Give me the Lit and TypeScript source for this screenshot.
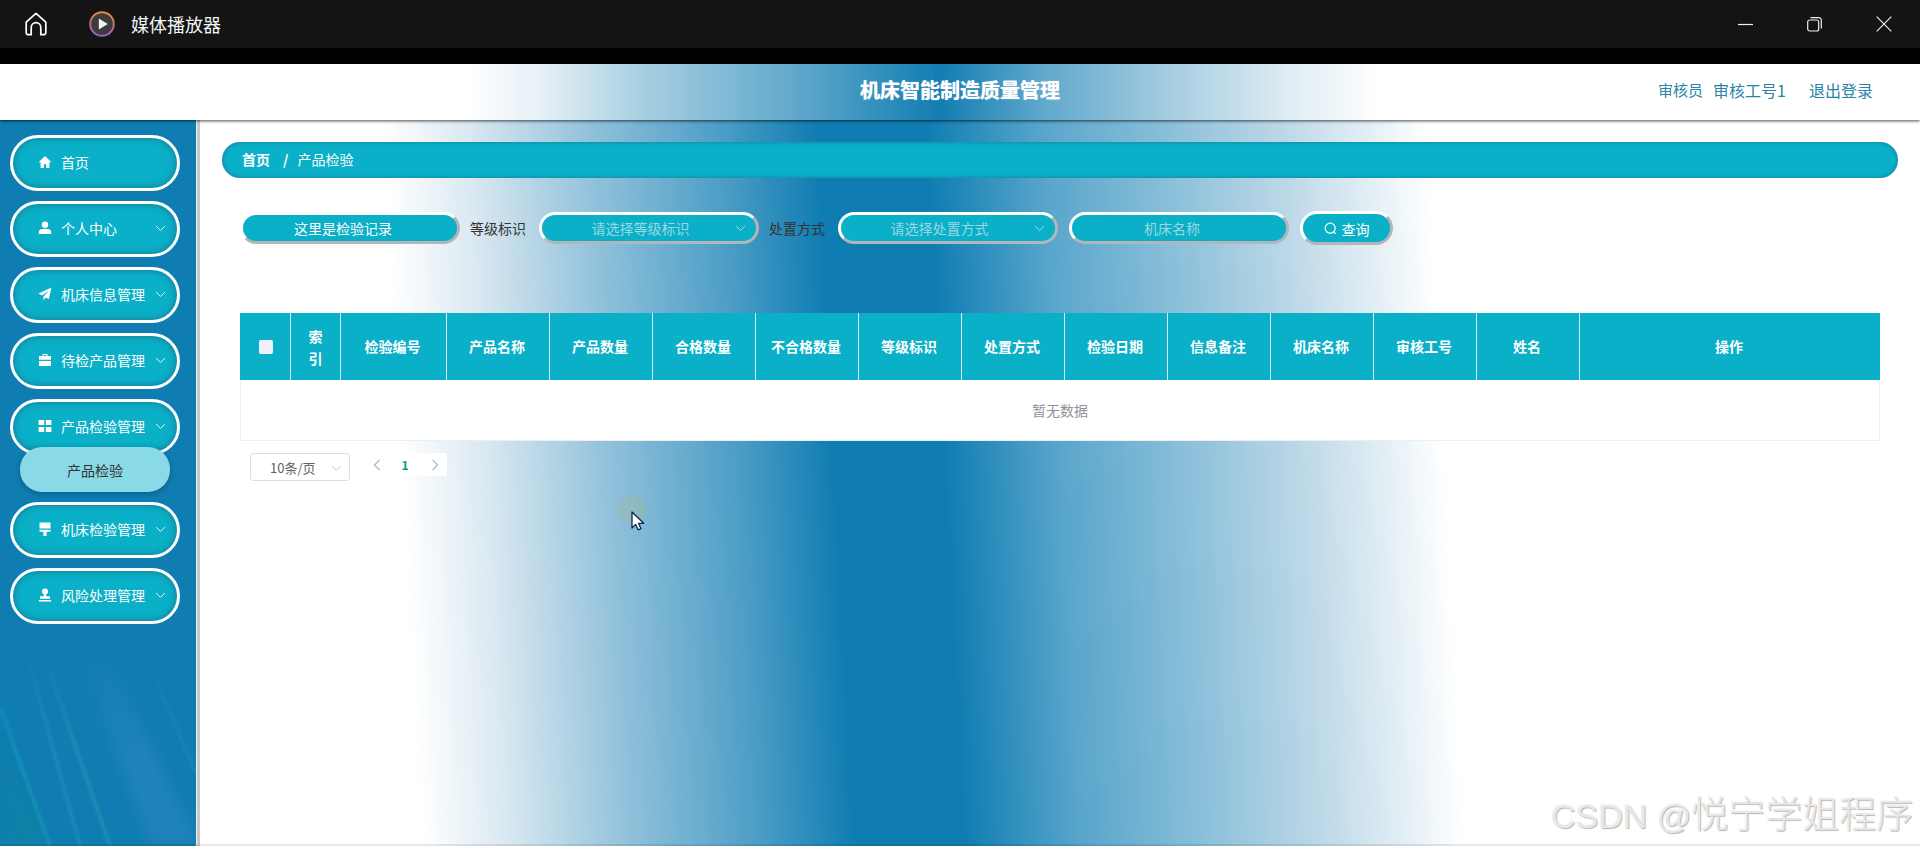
import { LitElement, html, css, svg } from "lit";
import { customElement } from "lit/decorators.js";

const chevron = html`<svg class="chev" viewBox="0 0 12 8" width="11" height="7"><path d="M1 1.2 6 6.2 11 1.2" fill="none" stroke="currentColor" stroke-width="1.1"/></svg>`;

const icons: Record<string, unknown> = {
  home: svg`<path d="M7 1 .6 7.2h2V13h3.3V9.2h2.2V13h3.3V7.2h2z" fill="#fff"/>`,
  user: svg`<circle cx="7" cy="3.8" r="3.2" fill="#fff"/><path d="M.8 13v-2c0-2 1.800-3 3.600-3h5.200c1.800 0 3.600 1 3.600 3v2z" fill="#fff"/>`,
  plane: svg`<path d="M13.500.5 .5 6.500l3.500 2L11 3.500 5.500 9.500v3.800l2.300-2.800 3 1.600z" fill="#fff"/>`,
  case: svg`<path d="M4.500 3V1h5v2H13v3.800H1V3zM5.700 3h2.600V2.100H5.700zM1 8h12v5H1z" fill="#fff"/>`,
  grid: svg`<path d="M.6 1h5.600v5H.6zM7.800 1h5.600v5H7.800zM.6 8h5.600v5H.6zM7.800 8h5.600v5H7.800z" fill="#fff"/>`,
  brush: svg`<path d="M1.500.5h11v6h-11zM1.500 7.800h11v2H8.600V14H5.400V9.800H1.500z" fill="#fff"/>`,
  stamp: svg`<circle cx="7" cy="3.600" r="3" fill="#fff"/><path d="M5.800 6h2.400v2.200H12v2.600H2V8.200h3.800zM.8 12h12.400v1.500H.8z" fill="#fff"/>`,
};

const menu = [
  { name: "首页", icon: "home", arrow: false },
  { name: "个人中心", icon: "user", arrow: true },
  { name: "机床信息管理", icon: "plane", arrow: true },
  { name: "待检产品管理", icon: "case", arrow: true },
  { name: "产品检验管理", icon: "grid", arrow: true, sub: "产品检验" },
  { name: "机床检验管理", icon: "brush", arrow: true },
  { name: "风险处理管理", icon: "stamp", arrow: true },
];

const cols = ["索引", "检验编号", "产品名称", "产品数量", "合格数量", "不合格数量", "等级标识", "处置方式", "检验日期", "信息备注", "机床名称", "审核工号", "姓名", "操作"];

@customElement("app-root")
export class AppRoot extends LitElement {
  static styles = css`
    :host {
      display: block;
      position: relative;
      width: 1920px;
      height: 846px;
      overflow: hidden;
      font-family: "Noto Sans CJK SC", "Liberation Sans", sans-serif;
      font-size: 14px;
      background: #fff;
      color: #333;
    }
    .app { display: flex; flex-direction: column; height: 846px; }
    .titlebar { height: 48px; background: #141414; display: flex; align-items: center; color: #fff; flex: none; }
    .tb-home { margin-left: 24px; display: block; }
    .tb-logo { margin-left: 41px; display: block; }
    .tb-name { margin-left: 16px; font-size: 18px; line-height: 24px; color: #f5f5f5; }
    .win { margin-left: auto; display: flex; align-items: center; gap: 54px; padding-right: 28px; }
    .win svg { display: block; }
    .blackbar { height: 16px; background: #000; flex: none; }
    .header {
      height: 56px; flex: none; position: relative; z-index: 3; box-sizing: border-box; padding-bottom: 5px;
      display: grid; grid-template-columns: 1fr auto 1fr; align-items: center;
      background: linear-gradient(90deg, #fff 470px, #e6f0f6 540px, #a9cfe2 640px, #5ea7ca 800px, #127db2 940px, #5ea7cb 1040px, #a5cde1 1170px, #dfecf4 1290px, #fff 1380px);
      box-shadow: 0 1px 3px rgba(0, 0, 0, 0.7);
    }
    .title { grid-column: 2; font-size: 20px; font-weight: 700; color: #fff; text-shadow: 0 0 1px #fff; }
    .user { grid-column: 3; justify-self: end; padding-right: 47px; display: flex; align-items: center; font-size: 16px; color: #2b85a6; }
    .user .role { margin-right: 10px; font-size: 15px; }
    .user .logout { margin-left: 23px; }
    .body { flex: 1; display: flex; min-height: 0; }
    .side {
      flex: none; position: relative; overflow: hidden;
      background: #107db2; border-right: 1px solid #f1f1f1;
      padding: 15px 16px 0 10px; box-sizing: content-box; width: 170px;
      display: flex; flex-direction: column; gap: 10px;
    }
    .streaks { position: absolute; left: 0; bottom: 0; display: block; }
    .item {
      position: relative; height: 56px; box-sizing: border-box; flex: none;
      display: flex; align-items: center;
      padding: 0 11px 2px 25px; border: 3px solid #fff; border-radius: 28px;
      background: #0aafc8; color: #fff;
      box-shadow: inset 0 0 7px rgba(40, 70, 90, 0.55);
    }
    .item .ic { display: block; width: 14px; height: 14px; margin-right: 9px; flex: none; }
    .item .chev { margin-left: auto; color: #e4f7fa; }
    .sub {
      position: relative; z-index: 1; flex: none; margin: -18px 10px 0; height: 45px; border-radius: 22px;
      background: #8ad9e6; color: #333; display: flex; align-items: center; justify-content: center;
      box-shadow: 0 2px 6px rgba(0, 50, 80, 0.4);
    }
    .main {
      flex: 1; min-width: 0; border-left: 3px solid #c9c9cd;
      padding: 22px 22px 0 22px;
      background: linear-gradient(87deg, #fff 12.6%, #d9e8f1 17.5%, #8fc0da 24.6%, #4a9cc5 32%, #107db2 37.2%, #107db2 43.5%, #58a5cb 50%, #84bcd8 56.3%, #bed9e8 64%, #fff 72%);
    }
    .crumb {
      height: 36px; border-radius: 18px; background: #0aafc8; color: #fff; box-sizing: border-box;
      display: flex; align-items: center; padding: 0 20px 2px;
      box-shadow: inset 0 0 4px rgba(40, 70, 90, 0.5);
    }
    .crumb b { font-weight: 700; }
    .crumb i { font-weight: 700; font-style: normal; margin: 0 9px 0 13px; }
    .content { padding-left: 18px; width: 1640px; }
    .filters { display: flex; align-items: center; height: 34px; margin-top: 33px; }
    .box {
      box-sizing: border-box; height: 32px; width: 220px; flex: none; padding-right: 14px;
      border: 3px solid; border-color: #fff #b4b4ba #b4b4ba #fff; border-radius: 16px;
      background: #0aafc8; color: #fff; position: relative;
      display: flex; align-items: center; justify-content: center;
    }
    .box.ph { color: #9ad8e3; }
    .box.sel { padding-right: 17px; }
    .box .chev { position: absolute; right: 10px; top: 10px; color: #a3dce6; }
    .label { color: #333; margin: 0 13px 0 10px; flex: none; }
    .gap { margin-left: 11px; }
    .btn {
      box-sizing: border-box; width: 93px; height: 34px; flex: none; margin-left: 11px; padding-top: 1px;
      border: 3px solid; border-color: #fff #b4b4ba #b4b4ba #fff; border-radius: 17px;
      background: #0aafc8; color: #fff; display: flex; align-items: center; justify-content: center; gap: 5px;
    }
    .btn svg { display: block; }
    .table { margin-top: 68px; border: 1px solid #ebeef5; border-top: 0; background: #fff; box-sizing: border-box; }
    .thead { display: grid; grid-template-columns: 50px 50px 106px repeat(11, 103px) 1fr; height: 67px; background: #0aafc8; margin-left: -1px; margin-right: -1px; }
    .th {
      display: flex; align-items: center; justify-content: center; text-align: center; padding: 0 2px 2px 0;
      color: #fff; font-weight: 700; border-left: 1px solid #d9f3f7; box-sizing: border-box; line-height: 22px;
    }
    .th.first { border-left: 0; padding: 0 0 0 2px; }
    .th.idx { padding: 0 14px; }
    .check { width: 14px; height: 14px; border-radius: 2px; background: #eef1fb; }
    .empty { height: 60px; display: flex; align-items: center; justify-content: center; color: #909399; }
    .pager { display: flex; align-items: flex-start; margin: 12px 0 0 10px; }
    .size {
      box-sizing: border-box; width: 100px; height: 28px; background: #fff; border: 1px solid #dcdfe6; border-radius: 3px;
      display: flex; align-items: center; padding-left: 19px; font-size: 13px; color: #606266; position: relative;
    }
    .size .chev { position: absolute; right: 7px; top: 11px; color: #c0c4cc; }
    .pages { display: flex; margin-left: 10px; height: 23px; background: #fff; align-items: center; }
    .pg { width: 34px; box-sizing: border-box; display: flex; justify-content: center; color: #b5b9c0; }
    .pg.cur { width: 22px; color: #0a9e7e; font-size: 12px; font-weight: 700; }
    .pg.next { width: 31px; padding-left: 6px; }
    .pg svg { display: block; }
    .watermark {
      position: absolute; left: 1551px; top: 790px; font-size: 34px; line-height: 44px; white-space: nowrap;
      font-family: "Liberation Sans", "Noto Sans CJK SC", sans-serif;
      color: #e8e8e8; text-shadow: 1px 1px 1px #b5b5b5, -1px -1px 0 #f8f8f8;
    }
    .watermark span { font-size: 37px; font-family: "Noto Sans CJK SC", sans-serif; font-weight: 300; }
    .bottom { position: absolute; left: 0; right: 0; bottom: 0; height: 2px; background: rgba(0, 0, 0, 0.09); }
    .cursor { position: absolute; left: 617px; top: 495px; display: block; }
  `;

  render() {
    return html`
      <div class="app">
        <div class="titlebar">
          <svg class="tb-home" width="24" height="24" viewBox="0 0 24 24" fill="none" stroke="#fff" stroke-width="1.700" stroke-linejoin="round">
            <path d="M2.200 10.200 12 1.300l9.800 8.900v10.300a2.200 2.200 0 0 1-2.200 2.200h-2.800v-7.200a4.800 4.800 0 0 0-9.600 0v7.200H4.400a2.200 2.200 0 0 1-2.200-2.200z"/>
          </svg>
          <svg class="tb-logo" width="26" height="26" viewBox="0 0 26 26">
            <defs><linearGradient id="lg" x1="0.600" y1="0" x2="0.400" y2="1"><stop offset="0" stop-color="#f08a3c"/><stop offset="0.500" stop-color="#b9707a"/><stop offset="1" stop-color="#9a5fc8"/></linearGradient></defs>
            <circle cx="13" cy="13" r="11.800" fill="#3c3c3c" stroke="url(#lg)" stroke-width="2"/>
            <path d="M9.800 7.500 18.800 13l-9 5.500z" fill="#f4f4f4"/>
          </svg>
          <div class="tb-name">媒体播放器</div>
          <div class="win">
            <svg width="15" height="15" viewBox="0 0 15 15"><path d="M0 7.500h15" stroke="#eee" stroke-width="1.200"/></svg>
            <svg width="15" height="15" viewBox="0 0 15 15" fill="none" stroke="#eee" stroke-width="1.200"><rect x="0.700" y="3" width="11" height="11" rx="2"/><path d="M3.500.7h8.300a2.500 2.500 0 0 1 2.500 2.500v8.300"/></svg>
            <svg width="16" height="16" viewBox="0 0 16 16"><path d="M.7.7 15.300 15.300M15.300.7.700 15.300" stroke="#eee" stroke-width="1.200"/></svg>
          </div>
        </div>
        <div class="blackbar"></div>
        <header class="header">
          <div class="title">机床智能制造质量管理</div>
          <div class="user"><span class="role">审核员</span><span>审核工号1</span><span class="logout">退出登录</span></div>
        </header>
        <div class="body">
          <nav class="side">
            <svg class="streaks" width="196" height="300" viewBox="0 0 196 300" fill="none">
              <defs>
                <filter id="bl" x="-30%" width="160%"><feGaussianBlur stdDeviation="1.400"/></filter>
                <filter id="bl2" x="-50%" y="-50%" width="200%" height="200%"><feGaussianBlur stdDeviation="7"/></filter>
                <linearGradient id="fade" x1="0" y1="0" x2="0" y2="1"><stop offset="0.300" stop-color="#000"/><stop offset="0.700" stop-color="#fff"/></linearGradient>
                <mask id="m"><rect width="196" height="300" fill="url(#fade)"/></mask>
              </defs>
              <g mask="url(#m)">
                <path d="M0 300V190l50 110z" fill="#0f879f" filter="url(#bl2)" opacity="0.500"/>
                <path d="M80 110h30l90 190h-50z" fill="#2a86c0" filter="url(#bl2)" opacity="0.600"/>
                <g filter="url(#bl)" stroke-linecap="round">
                  <path d="M0 161 50 300" stroke="#1fa9c6" stroke-width="3" opacity="0.500"/>
                  <path d="M23 94 80 300" stroke="#3db3c0" stroke-width="3" opacity="0.300"/>
                  <path d="M50 127 110 300" stroke="#3fb5b8" stroke-width="3" opacity="0.350"/>
                  <path d="M143 104 196 227" stroke="#3fa5cc" stroke-width="2" opacity="0.300"/>
                </g>
              </g>
            </svg>
            ${menu.map(
              (m) => html`
                <div class="item">
                  <svg class="ic" viewBox="0 0 14 14">${icons[m.icon]}</svg>
                  <span>${m.name}</span>
                  ${m.arrow ? chevron : ""}
                </div>
                ${m.sub ? html`<div class="sub">${m.sub}</div>` : ""}
              `
            )}
          </nav>
          <main class="main">
            <div class="crumb"><b>首页</b><i>/</i><span>产品检验</span></div>
            <div class="content">
              <div class="filters">
                <div class="box">这里是检验记录</div>
                <span class="label">等级标识</span>
                <div class="box ph sel">请选择等级标识${chevron}</div>
                <span class="label">处置方式</span>
                <div class="box ph sel">请选择处置方式${chevron}</div>
                <div class="box ph gap">机床名称</div>
                <div class="btn">
                  <svg width="13" height="13" viewBox="0 0 13 13" fill="none" stroke="#fff" stroke-width="1.200"><circle cx="6.200" cy="6.200" r="5"/><path d="M9.800 9.800 11.800 11.800"/></svg>
                  <span>查询</span>
                </div>
              </div>
              <div class="table">
                <div class="thead">
                  <div class="th first"><div class="check"></div></div>
                  ${cols.map((c, i) => html`<div class="th ${i === 0 ? "idx" : ""}">${c}</div>`)}
                </div>
                <div class="empty">暂无数据</div>
              </div>
              <div class="pager">
                <div class="size">10条/页${chevron}</div>
                <div class="pages">
                  <div class="pg"><svg width="8" height="12" viewBox="0 0 8 12" fill="none" stroke="currentColor" stroke-width="1.300"><path d="M6.500 1 1.500 6l5 5"/></svg></div>
                  <div class="pg cur">1</div>
                  <div class="pg next"><svg width="8" height="12" viewBox="0 0 8 12" fill="none" stroke="currentColor" stroke-width="1.300"><path d="M1.500 1l5 5-5 5"/></svg></div>
                </div>
              </div>
            </div>
          </main>
        </div>
      </div>
      <div class="watermark">CSDN @<span>悦宁学姐程序</span></div>
      <div class="bottom"></div>
      <svg class="cursor" width="32" height="36" viewBox="0 0 32 36">
        <circle cx="15" cy="15" r="14.500" fill="#a9b88a" opacity="0.280"/>
        <path d="M15 17v16l3.700-3.600 2.400 5.400 2.800-1.200-2.400-5.300h5.200z" fill="#fff" stroke="#10264e" stroke-width="1.300" stroke-linejoin="round"/>
      </svg>
    `;
  }
}
